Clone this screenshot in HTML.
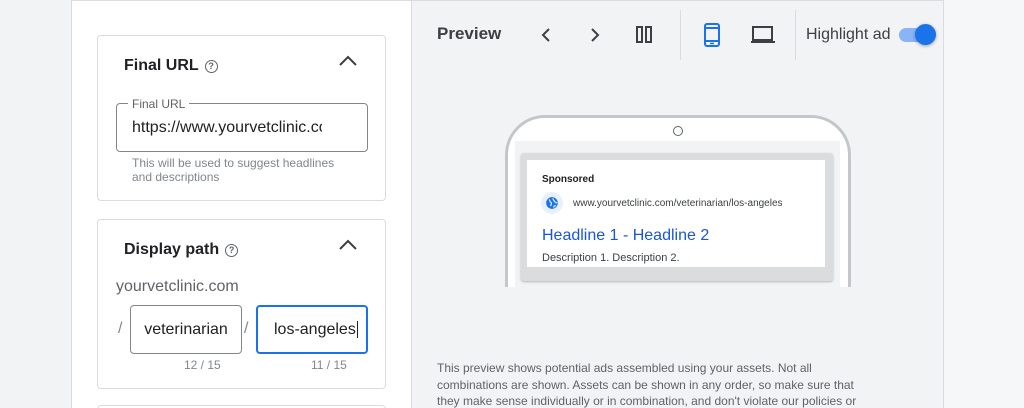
<!DOCTYPE html>
<html><head><style>
*{box-sizing:border-box;margin:0;padding:0}
html,body{width:1024px;height:408px;overflow:hidden}
body{background:#f1f3f4;font-family:"Liberation Sans",Arial,sans-serif;position:relative}
.abs{position:absolute}
#left{left:71px;top:0;width:340px;height:408px;background:#fff;border-top:1px solid #dadce0;border-left:1px solid #dadce0}
#right{left:411px;top:0;width:533px;height:408px;background:#f1f3f4;border-top:1px solid #dadce0;border-left:1px solid #dadce0;border-right:1px solid #dadce0}
#far{left:944px;top:0;width:80px;height:408px;background:#f6f7f8}
.card{position:absolute;left:97px;width:289px;border:1px solid #dadce0;border-radius:4px;background:#fff}
.h{position:absolute;font-size:16px;font-weight:bold;color:#202124}
.q{display:inline-block;width:13px;height:13px;border:1.3px solid #5f6368;border-radius:50%;font-size:9px;text-align:center;line-height:11px;color:#5f6368;font-weight:bold;vertical-align:1px;margin-left:6px}
.gray{color:#80868b}
</style></head><body>
<div id="left" class="abs"></div>
<div id="right" class="abs"></div>
<div id="far" class="abs"></div>

<div class="card" style="top:35px;height:166px">
  <div class="h" style="left:26px;top:21px">Final URL<span class="q">?</span></div>
  <svg class="abs" style="left:240px;top:18px" width="20" height="14"><path d="M2 11 L10 3 L18 11" fill="none" stroke="#3c4043" stroke-width="2"/></svg>
  <div class="abs" style="left:18px;top:67px;width:252px;height:49px;border:1px solid #80868b;border-radius:4px"></div>
  <div class="abs" style="left:30px;top:61px;background:#fff;padding:0 4px;font-size:12px;color:#5f6368">Final URL</div>
  <div class="abs" style="left:34px;top:83px;font-size:16px;color:#202124;width:190px;overflow:hidden;white-space:nowrap">https://www.yourvetclinic.com</div>
  <div class="abs gray" style="left:34px;top:120px;font-size:12px;line-height:14px">This will be used to suggest headlines<br>and descriptions</div>
</div>

<div class="card" style="top:219px;height:170px">
  <div class="h" style="left:26px;top:21px">Display path<span class="q">?</span></div>
  <svg class="abs" style="left:240px;top:18px" width="20" height="14"><path d="M2 11 L10 3 L18 11" fill="none" stroke="#3c4043" stroke-width="2"/></svg>
  <div class="abs" style="left:18px;top:58px;font-size:16px;color:#5f6368">yourvetclinic.com</div>
  <div class="abs gray" style="left:20px;top:100px;font-size:16px">/</div>
  <div class="abs" style="left:32px;top:85px;width:112px;height:49px;border:1px solid #80868b;border-radius:4px;font-size:16px;color:#202124;text-align:center;line-height:47px">veterinarian</div>
  <div class="abs gray" style="left:146px;top:100px;font-size:16px">/</div>
  <div class="abs" style="left:158px;top:85px;width:112px;height:49px;border:2px solid #1a73e8;border-radius:4px;font-size:16px;color:#202124;line-height:45px;padding-left:16px">los-angeles<span style="border-left:1px solid #202124;margin-left:1px"></span></div>
  <div class="abs gray" style="left:86px;top:138px;font-size:12px">12 / 15</div>
  <div class="abs gray" style="left:213px;top:138px;font-size:12px">11 / 15</div>
</div>
<div class="abs" style="left:97px;top:405px;width:289px;height:10px;border:1px solid #dadce0;border-radius:4px"></div>

<!-- toolbar -->
<div class="abs" style="left:437px;top:24px;font-size:17px;font-weight:bold;color:#3c4043">Preview</div>
<svg class="abs" style="left:538px;top:26px" width="16" height="18"><path d="M11 3 L5 9 L11 15" fill="none" stroke="#3c4043" stroke-width="2"/></svg>
<svg class="abs" style="left:587px;top:26px" width="16" height="18"><path d="M5 3 L11 9 L5 15" fill="none" stroke="#3c4043" stroke-width="2"/></svg>
<svg class="abs" style="left:635px;top:25px" width="20" height="20"><rect x="2" y="2" width="5" height="15" fill="none" stroke="#3c4043" stroke-width="2"/><rect x="11" y="2" width="5" height="15" fill="none" stroke="#3c4043" stroke-width="2"/></svg>
<div class="abs" style="left:680px;top:10px;width:1px;height:50px;background:#dadce0"></div>
<svg class="abs" style="left:703px;top:22px" width="20" height="26"><rect x="2" y="2" width="14" height="22" rx="2" fill="none" stroke="#1a73e8" stroke-width="2"/><line x1="2" y1="6" x2="16" y2="6" stroke="#1a73e8" stroke-width="2"/><line x1="2" y1="19" x2="16" y2="19" stroke="#1a73e8" stroke-width="2"/><line x1="7" y1="21.5" x2="11" y2="21.5" stroke="#1a73e8" stroke-width="1.5"/></svg>
<svg class="abs" style="left:750px;top:25px" width="26" height="20"><rect x="3" y="2" width="19" height="13" fill="none" stroke="#3c4043" stroke-width="2"/><rect x="1" y="16" width="24" height="2" fill="#3c4043"/></svg>
<div class="abs" style="left:795px;top:10px;width:1px;height:50px;background:#dadce0"></div>
<div class="abs" style="left:806px;top:26px;font-size:16px;color:#3c4043">Highlight ad</div>
<div class="abs" style="left:899px;top:28px;width:32px;height:14px;border-radius:7px;background:#8ab4f8"></div>
<div class="abs" style="left:915px;top:24px;width:21px;height:21px;border-radius:50%;background:#1a73e8;box-shadow:0 1px 3px rgba(0,0,0,.35)"></div>

<!-- phone (clipped) -->
<div class="abs" style="left:500px;top:110px;width:360px;height:177px;overflow:hidden">
  <div class="abs" style="left:5px;top:5px;width:346px;height:220px;border:3px solid #c4c7c9;border-radius:40px 40px 0 0;background:#fff"></div>
  <div class="abs" style="left:173px;top:16px;width:10px;height:10px;border:1.5px solid #5f6368;border-radius:50%"></div>
  <div class="abs" style="left:15px;top:31px;width:325px;height:160px;background:#f1f3f4"></div>
  <div class="abs" style="left:21px;top:43px;width:312px;height:128px;background:#dadcdd;border-radius:3px;box-shadow:0 1px 2px rgba(0,0,0,.25)"></div>
  <div class="abs" style="left:27px;top:50px;width:298px;height:107px;background:#fff"></div>
</div>
<div class="abs" style="left:542px;top:174px;font-size:10px;font-weight:bold;color:#202124">Sponsored</div>
<div class="abs" style="left:541px;top:192px;width:22px;height:22px;border-radius:50%;background:#e8f0fe"></div>
<svg class="abs" style="left:545px;top:196px" width="14" height="14" viewBox="0 0 24 24"><circle cx="12" cy="12" r="10" fill="#1a73e8"/><path d="M7 6 C9 8 8 10 10 11 C12 12 11 15 9 17 M14 4 C13 7 16 8 17 10 C18 12 20 12 21 11 M15 20 C15 17 17 16 19 17" fill="none" stroke="#e8f0fe" stroke-width="2"/></svg>
<div class="abs" style="left:573px;top:198px;font-size:10px;color:#3c4043">www.yourvetclinic.com/veterinarian/los-angeles</div>
<div class="abs" style="left:542px;top:227px;font-size:16px;color:#1a56db">Headline 1 - Headline 2</div>
<div class="abs" style="left:542px;top:252px;font-size:11px;color:#3c4043">Description 1. Description 2.</div>

<div class="abs" style="left:437px;top:360px;width:425px;font-size:12px;line-height:16.5px;color:#5f6368">This preview shows potential ads assembled using your assets. Not all combinations are shown. Assets can be shown in any order, so make sure that they make sense individually or in combination, and don't violate our policies or</div>
</body></html>
